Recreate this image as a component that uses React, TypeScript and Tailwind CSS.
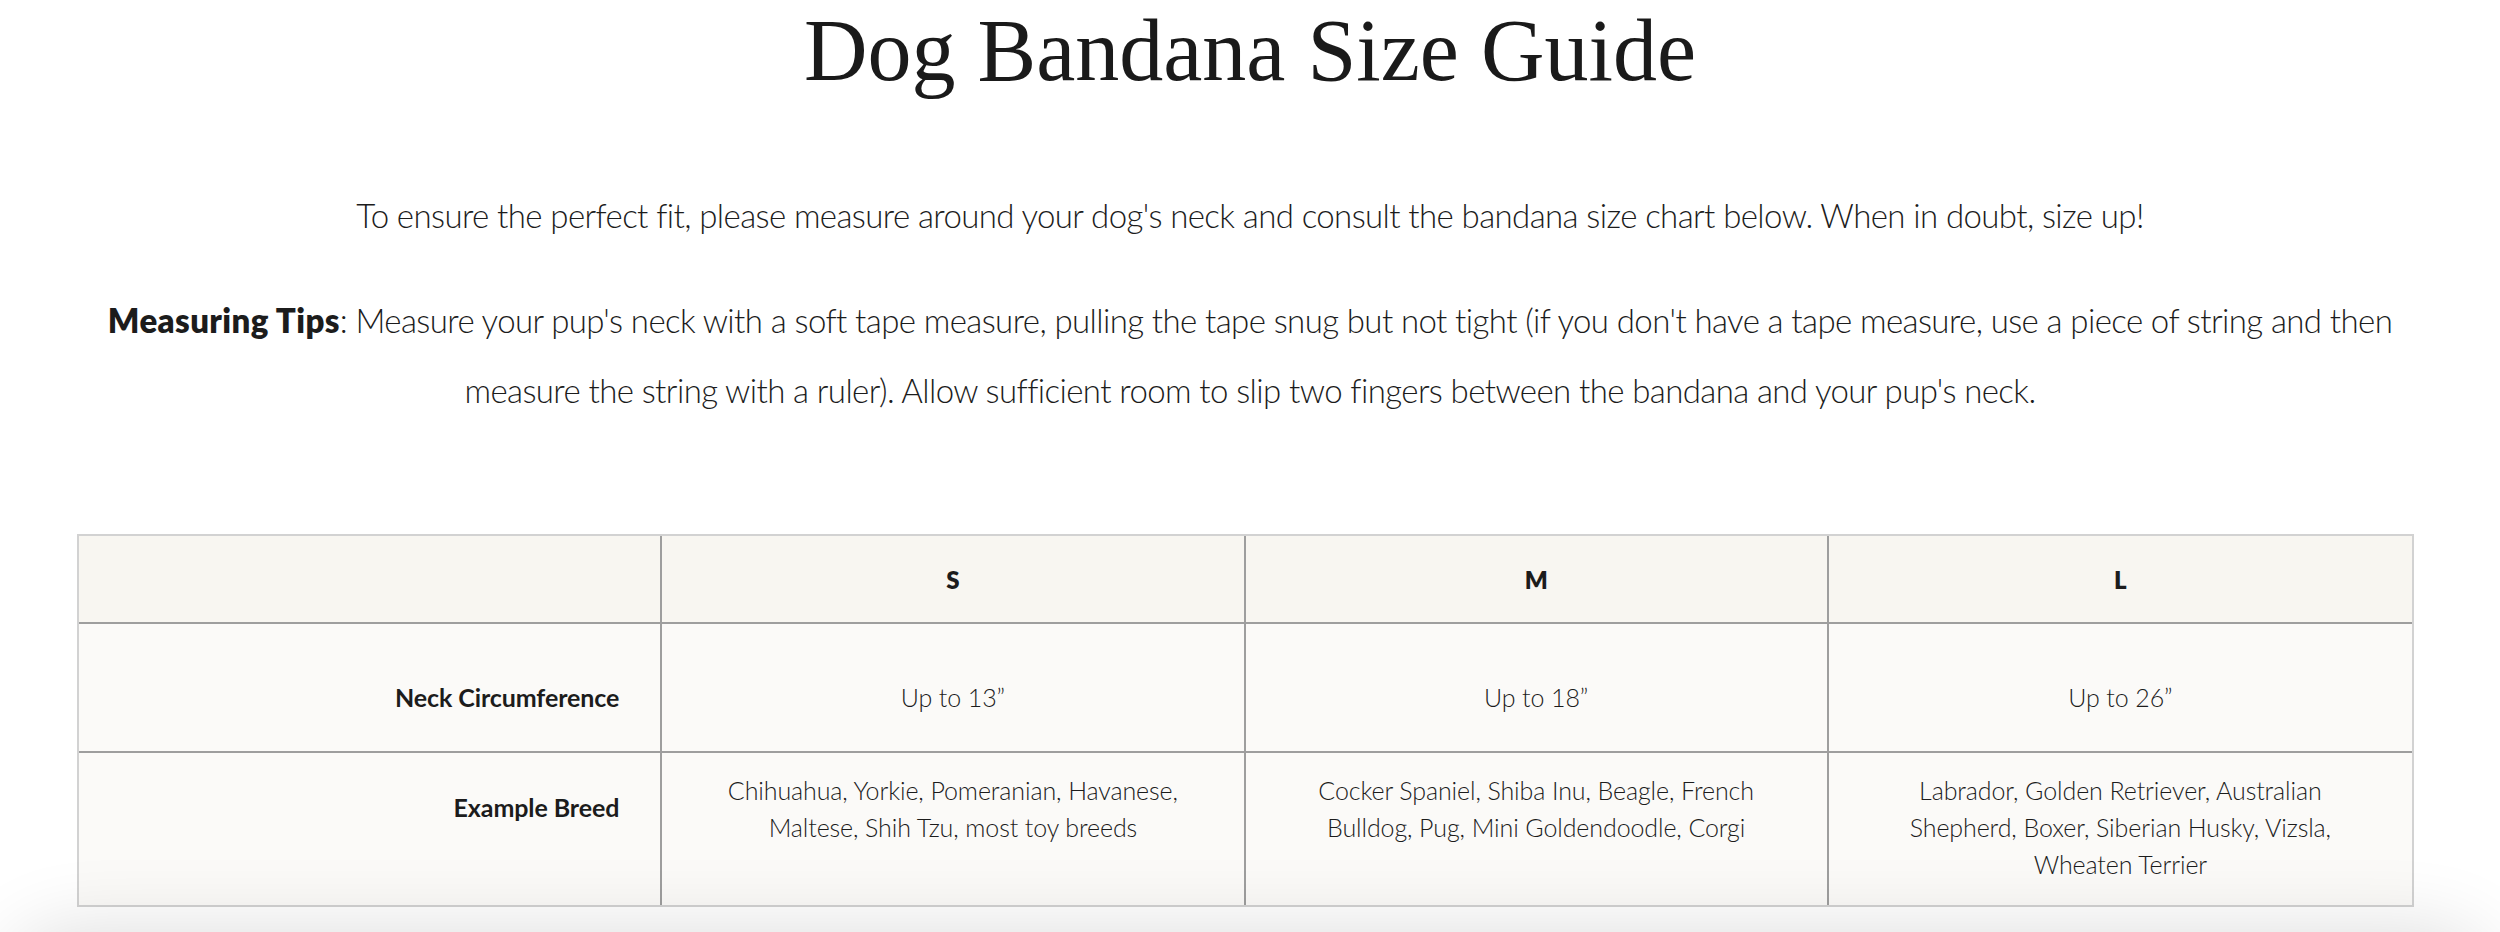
import React from "react";

const sans = "font-['Lato','Open_Sans',sans-serif]";

export default function App() {
  const sizes = ["S", "M", "L"];
  const neck = ["Up to 13”", "Up to 18”", "Up to 26”"];
  const breeds = [
    ["Chihuahua, Yorkie, Pomeranian, Havanese,", "Maltese, Shih Tzu, most toy breeds"],
    ["Cocker Spaniel, Shiba Inu, Beagle, French", "Bulldog, Pug, Mini Goldendoodle, Corgi"],
    ["Labrador, Golden Retriever, Australian", "Shepherd, Boxer, Siberian Husky, Vizsla,", "Wheaten Terrier"],
  ];
  return (
    <div className="relative w-[2500px] h-[932px] overflow-hidden bg-white text-[#1c1c1c]">
      <h1 className="mt-[7px] text-center font-['Liberation_Serif',serif] text-[88px] leading-[87px] font-normal text-[#1a1a1a]">
        Dog Bandana Size Guide
      </h1>

      <p className={`${sans} mt-[86px] text-center text-[33px] leading-[70px] font-light tracking-[-0.6px] whitespace-nowrap`}>
        To ensure the perfect fit, please measure around your dog's neck and consult the bandana size chart below. When in doubt, size up!
      </p>

      <div className={`${sans} mt-[35px] text-center text-[33px] leading-[70px] font-light tracking-[-0.6px] whitespace-nowrap`}>
        <p>
          <span className="font-extrabold tracking-[0.4px]">Measuring Tips</span>: Measure your pup's neck with a soft tape measure, pulling the tape snug but not tight (if you don't have a tape measure, use a piece of string and then
        </p>
        <p>
          measure the string with a ruler). Allow sufficient room to slip two fingers between the bandana and your pup's neck.
        </p>
      </div>

      <div className={`${sans} ml-[77px] mt-[109px] w-[2337px] border-2 border-[#d2d2d2] grid grid-cols-4 text-[25px] leading-[37px] tracking-[-0.1px]`}>
        {/* header row */}
        <div className="h-[88px] bg-[#f8f6f1] border-r-2 border-b-2 border-[#9e9e9e]" />
        {sizes.map((s, i) => (
          <div
            key={s}
            className={`h-[88px] bg-[#f8f6f1] border-b-2 border-[#9e9e9e] flex items-center justify-center text-[24px] font-extrabold ${i < 2 ? "border-r-2" : ""}`}
          >
            {s}
          </div>
        ))}

        {/* neck row */}
        <div className="h-[129px] bg-[#fbfaf8] border-r-2 border-b-2 border-[#9e9e9e] pt-[55px] pr-[41px] text-right font-bold">
          Neck Circumference
        </div>
        {neck.map((n, i) => (
          <div
            key={n}
            className={`h-[129px] bg-[#fbfaf8] border-b-2 border-[#9e9e9e] pt-[55px] text-center font-light ${i < 2 ? "border-r-2" : ""}`}
          >
            {n}
          </div>
        ))}

        {/* breed row */}
        <div className="h-[152px] bg-[#fbfaf8] border-r-2 border-[#9e9e9e] pt-[36px] pr-[41px] text-right font-bold">
          Example Breed
        </div>
        {breeds.map((lines, i) => (
          <div
            key={i}
            className={`h-[152px] bg-[#fbfaf8] border-[#9e9e9e] pt-[19px] text-center font-light ${i < 2 ? "border-r-2" : ""}`}
          >
            {lines.map((l) => (
              <div key={l}>{l}</div>
            ))}
          </div>
        ))}
      </div>

      <div className="pointer-events-none fixed left-[40px] right-[40px] top-[962px] h-[60px] rounded-full shadow-[0_0_80px_30px_rgba(0,0,0,0.14)]" />
    </div>
  );
}
